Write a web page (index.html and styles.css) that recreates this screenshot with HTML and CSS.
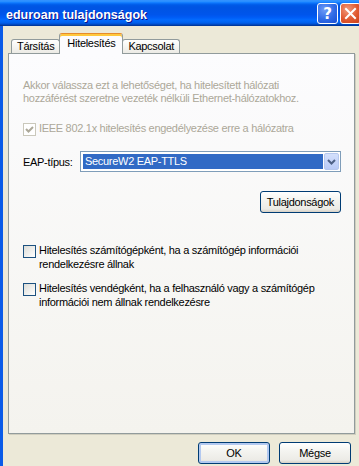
FILE: index.html
```html
<!DOCTYPE html>
<html>
    <head>
        <title>eduroam tulajdonságok</title>
        <meta charset="UTF-8">
        <meta name="viewport" content="width=device-width, initial-scale=1.0">
        <link rel="stylesheet" href="styles.css">
    </head>
    <body>
        <div class="ventana">
            <!--BARRA DE TITULO-->
            <div class="titulo">
                <span class="titulo-texto">eduroam tulajdonságok</span>
                <div class="controles">
                    <span class="ctl ayuda">?</span>
                    <span class="ctl cerrar">
                        <svg width="19" height="19" viewBox="0 0 19 19"><path d="M5 5 L14 14 M14 5 L5 14" stroke="#fff" stroke-width="2" stroke-linecap="square"/></svg>
                    </span>
                </div>
            </div>

            <div class="cliente">
                <div class="pestanas">
                    <div class="pestana">Társítás</div>
                    <div class="pestana activa">Hitelesítés</div>
                    <div class="pestana">Kapcsolat</div>
                </div>

                <div class="panel">
                    <p class="info">Akkor válassza ezt a lehetőséget, ha hitelesített hálózati<br>hozzáférést szeretne vezeték nélküli Ethernet-hálózatokhoz.</p>

                    <label class="check deshabilitado ieee">
                        <span class="caja"><svg width="11" height="11" viewBox="0 0 11 11"><path d="M2 5 L4.5 7.5 L9 3" fill="none" stroke="#aca899" stroke-width="2"/></svg></span>
                        <span>IEEE 802.1x hitelesítés engedélyezése erre a hálózatra</span>
                    </label>

                    <div class="fila-eap">
                        <span class="etiqueta">EAP-típus:</span>
                        <div class="combo">
                            <span class="valor">SecureW2 EAP-TTLS</span>
                            <span class="flecha"><svg width="13" height="15" viewBox="0 0 13 15"><path d="M3 6 L6.5 9.5 L10 6" fill="none" stroke="#4d6185" stroke-width="2"/></svg></span>
                        </div>
                    </div>

                    <div class="fila-prop">
                        <button type="button" class="btn">Tulajdonságok</button>
                    </div>

                    <label class="check primero">
                        <span class="caja"></span>
                        <span>Hitelesítés számítógépként, ha a számítógép információi<br>rendelkezésre állnak</span>
                    </label>

                    <label class="check">
                        <span class="caja"></span>
                        <span>Hitelesítés vendégként, ha a felhasználó vagy a számítógép<br>információi nem állnak rendelkezésre</span>
                    </label>
                </div>

                <div class="pie">
                    <button type="button" class="btn defecto">OK</button>
                    <button type="button" class="btn">Mégse</button>
                </div>
            </div>
        </div>
    </body>
</html>
```

FILE: styles.css
```css
*{
    box-sizing: border-box;
}
body{
    margin: 0;
    width: 359px;
    height: 466px;
    overflow: hidden;
    background: #ece9d8;
    font-family: "Liberation Sans", Arial, sans-serif;
    font-size: 11px;
    letter-spacing: -0.3px;
    color: #000;
}
.ventana{
    display: flex;
    flex-direction: column;
    height: 466px;
}

/* barra de titulo */
.titulo{
    flex: none;
    height: 26px;
    display: flex;
    justify-content: space-between;
    padding-left: 6px;
    background: linear-gradient(to bottom, #3593ff 0%, #288eff 6%, #127dff 10%, #0262ee 16%, #0057e5 22%, #0054e3 30%, #0055eb 56%, #005bf5 66%, #026afe 76%, #0062ef 86%, #0052d6 92%, #0040ab 96%, #003092 100%);
}
.titulo-texto{
    margin-top: 9px;
    line-height: 13px;
    color: #fff;
    font-weight: bold;
    font-size: 12.5px;
    letter-spacing: 0;
    text-shadow: 1px 1px 0 #0f1089;
}
.controles{
    display: flex;
    gap: 2px;
    padding-top: 3px;
    margin-right: -2px;
}
.ctl{
    width: 21px;
    height: 21px;
    border: 1px solid #fff;
    border-radius: 3px;
    display: flex;
    align-items: center;
    justify-content: center;
}
.ayuda{
    background: radial-gradient(circle at 35% 30%, #6e9cf7 0%, #2f6ae6 55%, #1a4fd2 100%);
    color: #fff;
    font-weight: bold;
    font-size: 15px;
    letter-spacing: 0;
    font-family: "DejaVu Sans", sans-serif;
}
.cerrar{
    background: radial-gradient(circle at 35% 30%, #f19a7d 0%, #e0582f 55%, #c8401c 100%);
}

/* area de cliente */
.cliente{
    flex: 1;
    border-left: 3px solid #0a5be8;
    padding: 7px 4px 0 5px;
}
.pestanas{
    position: relative;
    z-index: 1;
    display: flex;
    align-items: flex-end;
    height: 20px;
    padding-left: 3px;
}
.pestana{
    height: 14px;
    line-height: 12px;
    padding: 0 5px;
    border: 1px solid #919b9c;
    border-bottom: 0;
    border-radius: 3px 3px 0 0;
    background: linear-gradient(to bottom, #fff, #ecebe5);
}
.pestana.activa{
    height: 21px;
    margin: 0 -1px -1px;
    padding: 3px 7px 0;
    line-height: 13px;
    border-top-color: #e68b2c;
    box-shadow: inset 0 2px 0 #ffc83c;
    background: #fcfcfe;
    position: relative;
}

.panel{
    height: 381px;
    border: 1px solid #919b9c;
    background: linear-gradient(to bottom, #fcfcfe, #f4f3ee);
    box-shadow: 1px 1px 0 #d0cebf;
    padding: 25px 13px 0 14px;
}
.info{
    margin: 0;
    line-height: 13px;
    color: #aca899;
}

.check{
    display: flex;
    gap: 3px;
    line-height: 14px;
    margin-top: 10px;
}
.check .caja{
    flex: none;
    width: 13px;
    height: 13px;
    margin-top: 2px;
    border: 1px solid #1c5180;
    background: linear-gradient(135deg, #dcdcd7, #fff);
}
.check.deshabilitado{
    color: #aca899;
}
.check.deshabilitado .caja{
    border-color: #cac8bb;
    background: #fff;
}
.check.ieee{
    margin-top: 16px;
}
.check.primero{
    margin-top: 30px;
}

.fila-eap{
    display: flex;
    align-items: center;
    margin-top: 15px;
}
.etiqueta{
    width: 57px;
}
.combo{
    flex: 1;
    height: 21px;
    display: flex;
    border: 1px solid #7f9db9;
    background: #fff;
    padding: 1px;
}
.valor{
    flex: 1;
    margin: 1px;
    padding-left: 2px;
    line-height: 15px;
    background: #316ac5;
    color: #fff;
}
.flecha{
    width: 15px;
    border: 1px solid #b6c8ee;
    border-radius: 2px;
    background: linear-gradient(to bottom, #d4e0fc, #b9cbf7);
    display: flex;
    align-items: center;
    justify-content: center;
}

.fila-prop{
    display: flex;
    justify-content: flex-end;
    margin-top: 19px;
}
.btn{
    height: 22px;
    padding: 0 6px;
    border: 1px solid #003c74;
    border-radius: 3px;
    background: linear-gradient(to bottom, #fff 0%, #f4f4f0 40%, #ecebe6 85%, #d6d0c5 100%);
    font-family: "Liberation Sans", Arial, sans-serif;
    font-size: 11px;
    letter-spacing: -0.3px;
    color: #000;
}

.pie{
    display: flex;
    justify-content: flex-end;
    gap: 9px;
    padding: 8px 4px 0 0;
}
.pie .btn{
    width: 72px;
}
.btn.defecto{
    box-shadow: inset 0 0 0 2px #b3c9f0;
}
```
